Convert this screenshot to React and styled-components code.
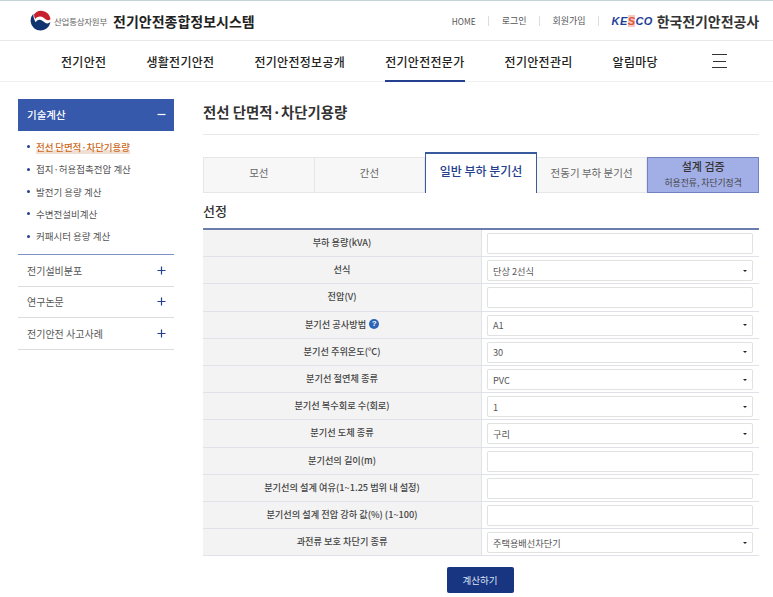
import React from 'react';
import styled, { createGlobalStyle } from 'styled-components';

const GlobalStyle = createGlobalStyle`
  html, body {
    margin: 0;
    padding: 0;
    background: #fff;
    font-family: "Noto Sans CJK KR", "Noto Sans", sans-serif;
    color: #333;
  }
  * { box-sizing: border-box; }
`;

const Page = styled.div`
  width: 773px;
  height: 597px;
  overflow: hidden;
  border-top: 1px solid #c5d6d9;
`;

const TopBar = styled.header`
  height: 40px;
  padding: 0 14px 0 30px;
  display: flex;
  align-items: center;
  justify-content: space-between;
  border-bottom: 1px solid #e8e8e8;
`;

const Brand = styled.div`
  display: flex;
  align-items: center;
`;

const Ministry = styled.span`
  font-size: 8.5px;
  color: #666;
  margin-left: 3px;
  letter-spacing: -0.25px;
`;

const SystemName = styled.span`
  font-size: 14px;
  font-weight: 700;
  color: #222;
  margin-left: 6px;
`;

const Utility = styled.div`
  display: flex;
  align-items: center;
`;

const UtilLink = styled.a`
  font-size: ${p => (p.$latin ? '8.3px' : '9px')};
  color: #555;
  padding-right: 12.5px;
  margin-right: 12.5px;
  border-right: 1px solid #ddd;
  line-height: 10px;
`;

const Kesco = styled.span`
  font-family: "Liberation Sans", sans-serif;
  font-size: 11px;
  font-weight: 700;
  font-style: italic;
  color: #1f3f99;
  letter-spacing: 0.4px;
`;

const KescoS = styled.span`
  color: #e0533c;
  background: #f7c9c4;
`;

const KescoName = styled.span`
  font-size: 14px;
  font-weight: 700;
  color: #333;
  margin-left: 4px;
  letter-spacing: -0.1px;
`;

const Nav = styled.nav`
  height: 41px;
  padding-left: 41px;
  display: flex;
  border-bottom: 1px solid #f0f0f0;
`;

const NavItem = styled.a`
  height: 41px;
  padding: 0 20px;
  display: flex;
  align-items: center;
  font-size: 12px;
  font-weight: 500;
  color: #222;
  letter-spacing: 0.3px;
  position: relative;
  &::after {
    content: "";
    display: ${p => (p.$active ? 'block' : 'none')};
    position: absolute;
    left: 20px;
    right: 20px;
    bottom: 0;
    height: 2px;
    background: #233f8e;
  }
`;

const Burger = styled.div`
  width: 15px;
  height: 14px;
  margin: 13px 0 0 34px;
  border-top: 1px solid #333;
  border-bottom: 1px solid #333;
  display: flex;
  align-items: center;
  &::before {
    content: "";
    flex: 1;
    height: 1px;
    background: #333;
    margin: 0 1px;
  }
`;

const Body = styled.div`
  display: flex;
  padding: 17px 14px 0 18px;
`;

const Side = styled.aside`
  width: 156px;
  flex: none;
  margin-right: 29px;
`;

const SideHead = styled.div`
  height: 32px;
  padding: 0 7px 2px 9px;
  background: #3659ab;
  color: #fff;
  font-size: 10.5px;
  font-weight: 500;
  display: flex;
  align-items: center;
  justify-content: space-between;
`;

const SideList = styled.ul`
  list-style: none;
  margin: 0;
  padding: 4.6px 0 6.4px 9px;
  border-bottom: 1px solid #7d92c2;
`;

const SideLink = styled.li`
  height: 22.4px;
  display: flex;
  align-items: center;
  font-size: 9.5px;
  color: ${p => (p.$active ? '#cc6a22' : '#555')};
  font-weight: ${p => (p.$active ? 500 : 400)};
  white-space: nowrap;
  &::before {
    content: "";
    width: 3px;
    height: 3px;
    border-radius: 50%;
    background: #23408f;
    margin-right: 6px;
    flex: none;
  }
`;

const ActiveText = styled.span`
  background: linear-gradient(transparent 72%, #f0dfd2 72%);
  letter-spacing: -0.1px;
`;

const SideGroup = styled.div`
  height: 31.6px;
  padding: 0 7px 0 9px;
  display: flex;
  align-items: center;
  justify-content: space-between;
  border-bottom: 1px solid #dcdcdc;
  font-size: 10px;
  color: #555;
`;

const Main = styled.main`
  width: 556px;
`;

const PageTitle = styled.h1`
  margin: 0 0 17px;
  height: 36px;
  padding-top: 1px;
  font-size: 14.4px;
  line-height: 24px;
  font-weight: 700;
  color: #333;
  border-bottom: 1px solid #e8e8e8;
`;

const Tabs = styled.div`
  display: flex;
  height: 41px;
  align-items: flex-end;
`;

const Tab = styled.div`
  flex: 1;
  height: ${p => (p.$active ? '41px' : '36px')};
  display: flex;
  flex-direction: column;
  align-items: center;
  justify-content: center;
  padding-bottom: 6px;
  font-size: ${p => (p.$active ? '12px' : '10.5px')};
  font-weight: ${p => (p.$active ? 500 : 400)};
  color: ${p => (p.$active ? '#23408f' : '#666')};
  background: ${p => (p.$active ? '#fff' : '#f7f7f7')};
  border: 1px solid #e6e6e6;
  border-left: ${p => (p.$first ? '1px solid #e6e6e6' : 'none')};
  ${p => p.$active && `
    border: 1px solid #3a5a9f;
    border-top-width: 2px;
    border-bottom: none;
    padding-bottom: 7px;
  `}
`;

const VerifyTab = styled(Tab)`
  background: #a2aee6;
  border: 1px solid #6f83c2;
  color: #333;
  font-size: 11px;
  font-weight: 500;
  line-height: 13px;
  padding: 0 0 2px;
`;

const VerifySub = styled.span`
  font-size: 8.8px;
  font-weight: 400;
  color: #444;
  margin-top: 5px;
  line-height: 10px;
`;

const SectionTitle = styled.h2`
  margin: 0;
  height: 35px;
  font-size: 13px;
  line-height: 36px;
  font-weight: 500;
  color: #333;
`;

const Table = styled.div`
  border-top: 2px solid #6c7cab;
`;

const Row = styled.div`
  display: grid;
  grid-template-columns: 279px 277px;
  height: 27.2px;
  border-bottom: 1px solid #dfe2ea;
`;

const Label = styled.div`
  background: #f3f3f3;
  border-right: 1px solid #dfe2ea;
  display: flex;
  align-items: center;
  justify-content: center;
  gap: 3px;
  font-size: 9.2px;
  font-weight: 500;
  color: #444;
  padding-bottom: 2px;
`;

const Cell = styled.div`
  padding: 3px 6px 2px 5px;
  display: flex;
  align-items: center;
`;

const Field = styled.div`
  width: 100%;
  height: 21px;
  padding: 0 5px 0 5px;
  background: #fff;
  border: 1px solid #e2e2e2;
  border-radius: 2px;
  box-shadow: 0 0 1px #eee;
  display: flex;
  align-items: center;
  justify-content: space-between;
  font-size: 9.2px;
  color: #555;
`;

const Caret = styled.span`
  width: 0;
  height: 0;
  border-left: 2px solid transparent;
  border-right: 2px solid transparent;
  border-top: 2.5px solid #222;
`;

const Help = styled.span`
  width: 10px;
  height: 10px;
  border-radius: 50%;
  background: #2c64b8;
  color: #fff;
  font-family: "Liberation Sans", sans-serif;
  font-size: 8px;
  font-weight: 700;
  line-height: 10px;
  text-align: center;
`;

const Actions = styled.div`
  display: flex;
  justify-content: center;
  padding: 11px 2px 0 0;
`;

const CalcButton = styled.button`
  width: 67px;
  height: 26px;
  padding: 0;
  border: none;
  border-radius: 2px;
  background: #183582;
  color: #dfe4f2;
  font-family: inherit;
  font-size: 9.5px;
`;

const Expand = ({ minus, color }) => (
  <svg width="11" height="11" viewBox="0 0 11 11">
    <path d={minus ? 'M1.5 5.5h8' : 'M1.5 5.5h8M5.5 1.5v8'} stroke={color} strokeWidth="1.2" fill="none" />
  </svg>
);

const Emblem = () => (
  <svg width="21" height="21" viewBox="0 0 20 20">
    <circle cx="10" cy="10" r="9.5" fill="#fff" />
    <path d="M3.2 3.6A9.4 9.4 0 0 0 1 12.6c1 3.9 4.6 6.9 9 6.9 4.9 0 8.9-3.7 9.4-8.3-1.2 1.6-3.4 2-5 1-1.8-1-2.8-2.6-5-2.8-2-.1-3.2 1-4 2.3C4 9.4 3 6.6 3.2 3.6z" fill="#10346f" />
    <path d="M3.8 4.4C5.4 2 7.6.6 10.4.6c4.8 0 8.8 3.6 9.1 8.2-1.4 1.2-3 1.2-4.4.2-1.6-1.2-3-2.9-5.5-2.9-2.1 0-3.7 1.1-4.7 2.5C4.2 7.4 3.9 6 3.8 4.4z" fill="#c9202f" />
  </svg>
);

const sideLinks = ['접지·허용접촉전압 계산', '발전기 용량 계산', '수변전설비계산', '커패시터 용량 계산'];
const sideGroups = ['전기설비분포', '연구논문', '전기안전 사고사례'];
const navItems = ['전기안전', '생활전기안전', '전기안전정보공개', '전기안전전문가', '전기안전관리', '알림마당'];

const rows = [
  { label: '부하 용량(kVA)' },
  { label: '선식', value: '단상 2선식' },
  { label: '전압(V)' },
  { label: '분기선 공사방법', value: 'A1', help: true },
  { label: '분기선 주위온도(℃)', value: '30' },
  { label: '분기선 절연체 종류', value: 'PVC' },
  { label: '분기선 복수회로 수(회로)', value: '1' },
  { label: '분기선 도체 종류', value: '구리' },
  { label: '분기선의 길이(m)' },
  { label: '분기선의 설계 여유(1~1.25 범위 내 설정)' },
  { label: '분기선의 설계 전압 강하 값(%) (1~100)' },
  { label: '과전류 보호 차단기 종류', value: '주택용배선차단기' },
];

export default function App() {
  return (
    <Page>
      <GlobalStyle />
      <TopBar>
        <Brand>
          <Emblem />
          <Ministry>산업통상자원부</Ministry>
          <SystemName>전기안전종합정보시스템</SystemName>
        </Brand>
        <Utility>
          <UtilLink $latin>HOME</UtilLink>
          <UtilLink>로그인</UtilLink>
          <UtilLink>회원가입</UtilLink>
          <Kesco>KE<KescoS>S</KescoS>CO</Kesco>
          <KescoName>한국전기안전공사</KescoName>
        </Utility>
      </TopBar>
      <Nav>
        {navItems.map(item => (
          <NavItem key={item} $active={item === '전기안전전문가'}>{item}</NavItem>
        ))}
        <Burger />
      </Nav>
      <Body>
        <Side>
          <SideHead>기술계산<Expand minus color="#fff" /></SideHead>
          <SideList>
            <SideLink $active><ActiveText>전선 단면적·차단기용량</ActiveText></SideLink>
            {sideLinks.map(link => <SideLink key={link}>{link}</SideLink>)}
          </SideList>
          {sideGroups.map(group => (
            <SideGroup key={group}>{group}<Expand color="#23408f" /></SideGroup>
          ))}
        </Side>
        <Main>
          <PageTitle>전선 단면적·차단기용량</PageTitle>
          <Tabs>
            <Tab $first>모선</Tab>
            <Tab>간선</Tab>
            <Tab $active>일반 부하 분기선</Tab>
            <Tab>전동기 부하 분기선</Tab>
            <VerifyTab>설계 검증<VerifySub>허용전류, 차단기정격</VerifySub></VerifyTab>
          </Tabs>
          <SectionTitle>선정</SectionTitle>
          <Table>
            {rows.map(row => (
              <Row key={row.label}>
                <Label>{row.label}{row.help && <Help>?</Help>}</Label>
                <Cell>
                  <Field>{row.value}{row.value && <Caret />}</Field>
                </Cell>
              </Row>
            ))}
          </Table>
          <Actions>
            <CalcButton>계산하기</CalcButton>
          </Actions>
        </Main>
      </Body>
    </Page>
  );
}
